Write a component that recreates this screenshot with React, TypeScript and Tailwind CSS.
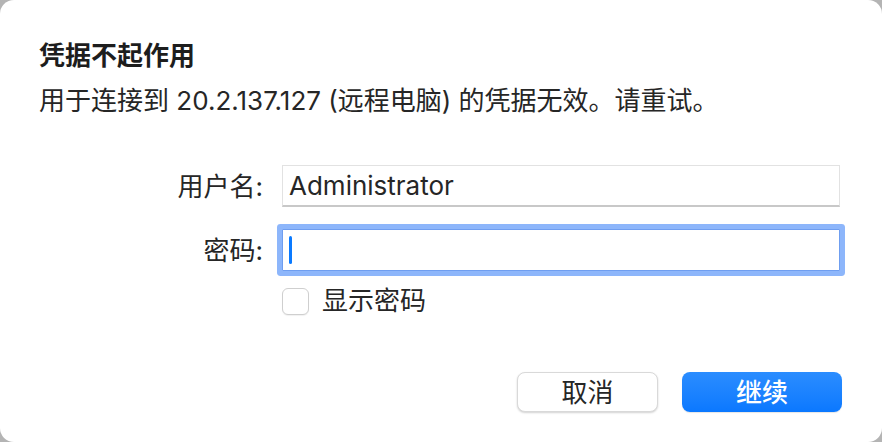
// Credentials dialog
const font = 'font-["Inter","Noto_Sans_CJK_SC",sans-serif]'

export default function App() {
  return (
    <div className={`w-[882px] h-[442px] bg-[#b4b4b4] ${font}`}>
      <div className="flex h-full w-full flex-col rounded-[14px] bg-white pl-[39px] pr-[40px] pt-[41px] pb-[30px] text-[26px] text-[#262626]">
        {/* Title */}
        <h1 className="text-[26px] leading-[30px] font-bold text-[#1d1d1d]">凭据不起作用</h1>
        <p className="mt-[15px] leading-[30px]">
          用于连接到 20.2.137.127 (远程电脑) 的凭据无效。请重试。
        </p>

        {/* Form */}
        <div className="mt-[49px] grid grid-cols-[224px_558px] gap-x-[19px]">
          <label className="flex h-[42px] items-center justify-end">用户名:</label>
          <div className="flex h-[42px] items-center border border-[#e2e2e2] border-b-[#c8c8c8] border-b-2 bg-white px-[6px]">
            Administrator
          </div>

          <label className="mt-[22px] flex h-[42px] items-center justify-end">密码:</label>
          <div className="mt-[22px] flex h-[42px] items-center border border-[#6f9ef0] bg-white px-[6px] ring-[5px] ring-[#8db6fb] rounded-[1px]">
            <span className="block h-[28px] w-[3px] rounded-full bg-[#0a7aff]" />
          </div>

          <div />
          <div className="mt-[15px] flex items-center gap-[13px]">
            <span className="block h-[27px] w-[27px] rounded-[6px] border border-[#cfcfcf] bg-white shadow-[0_1px_1px_rgba(0,0,0,0.06)]" />
            <span className="leading-[30px]">显示密码</span>
          </div>
        </div>

        {/* Buttons */}
        <div className="mt-auto flex justify-end gap-[24px]">
          <button className="h-[40px] w-[141px] rounded-[8px] border border-[#d9d9d9] bg-white text-[26px] text-[#262626] shadow-[0_1px_2px_rgba(0,0,0,0.18)]">
            取消
          </button>
          <button className="h-[40px] w-[160px] rounded-[8px] bg-gradient-to-b from-[#2a8dff] to-[#0a78ff] text-[26px] font-medium text-white shadow-[0_1px_1px_rgba(0,0,0,0.1)]">
            继续
          </button>
        </div>
      </div>
    </div>
  )
}
